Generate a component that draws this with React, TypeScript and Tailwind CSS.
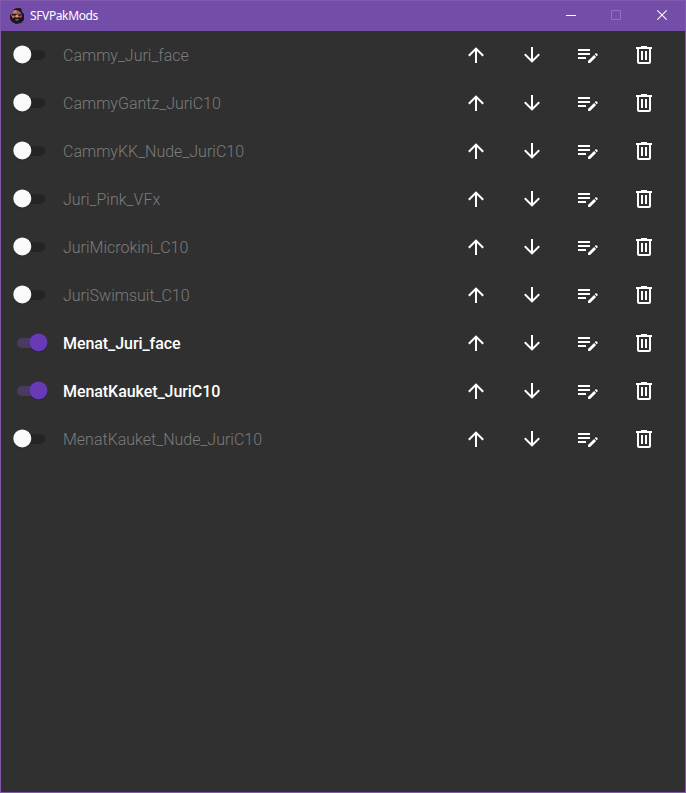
const mods = [
  { name: "Cammy_Juri_face", on: false },
  { name: "CammyGantz_JuriC10", on: false },
  { name: "CammyKK_Nude_JuriC10", on: false },
  { name: "Juri_Pink_VFx", on: false },
  { name: "JuriMicrokini_C10", on: false },
  { name: "JuriSwimsuit_C10", on: false },
  { name: "Menat_Juri_face", on: true },
  { name: "MenatKauket_JuriC10", on: true },
  { name: "MenatKauket_Nude_JuriC10", on: false },
];

const icons = [
  { label: "Move up", d: "M13 20H11V8L5.5 13.5L4.08 12.08L12 4.16L19.92 12.08L18.5 13.5L13 8V20Z" },
  { label: "Move down", d: "M11 4H13V16L18.5 10.5L19.92 11.92L12 19.84L4.08 11.92L5.5 10.5L11 16V4Z" },
  {
    label: "Edit",
    d: "M2 6V8H14V6H2M2 10V12H14V10H2M20.04 10.13C19.9 10.13 19.76 10.19 19.65 10.3L18.65 11.3L20.7 13.35L21.7 12.35C21.92 12.14 21.92 11.79 21.7 11.58L20.42 10.3C20.31 10.19 20.18 10.13 20.04 10.13M18.07 11.88L12 17.94V20H14.06L20.12 13.93L18.07 11.88M2 14V16H10V14H2Z",
  },
  {
    label: "Delete",
    d: "M9 3V4H4V6H5V19A2 2 0 0 0 7 21H17A2 2 0 0 0 19 19V6H20V4H15V3H9M7 6H17V19H7V6M9 8V17H11V8H9M13 8V17H15V8H13Z",
  },
];

function Toggle({ on }: { on: boolean }) {
  return (
    <button role="switch" aria-checked={on} className="ml-4 flex h-12 w-[46px] shrink-0 items-center">
      <span className={`flex h-[10px] w-7 items-center rounded-full ${on ? "bg-[#4b3a60]" : "bg-[#242424]"}`}>
        <span
          className={`h-[18px] w-[18px] shrink-0 -translate-y-[0.6px] rounded-full shadow-[0_1px_1px_rgba(0,0,0,0.25)] ${
            on ? "translate-x-[12.5px] bg-[#673ab7]" : "-translate-x-[3.7px] bg-[#fafafa]"
          }`}
        />
      </span>
    </button>
  );
}

function AppIcon() {
  return (
    <svg width="16" height="16" viewBox="0 0 16 16" className="shrink-0">
      <path d="M5 1L8 0L12 1L13 4L15 6V12L12 15L7 16L3 14L1 11V7L3 5Z" fill="#1c1621" />
      <path d="M4 3L7 2L10 3L12 5L13 9H3L2 7Z" fill="#a65f4e" />
      <path d="M4 3L7 2L8 4L5 5Z" fill="#d58b68" />
      <path d="M3 6H7L8 7L12 6V7.5L8.5 8L7 7.5L3 7.5Z" fill="#23151d" />
      <path d="M7 7H9L9.5 9.5H6.5Z" fill="#df9470" />
      <path d="M3 8H5.5L5 10L3 9.5Z" fill="#c27860" />
      <path d="M10.5 8H12.5L12 10L10.5 9.5Z" fill="#93503f" />
      <path d="M6 11.2H10L9 12.5H7Z" fill="#8f7475" />
      <path d="M9 0H12L13 4L11 3Z" fill="#21182a" />
    </svg>
  );
}

export default function App() {
  return (
    <div className="flex h-[793px] w-[686px] flex-col border border-[#8059ad] bg-[#303030] text-white">
      <header className="flex h-[30px] shrink-0 items-center bg-[#744da9] pl-2">
        <AppIcon />
        <span className="ml-[5px] flex-1 font-['Noto_Sans',sans-serif] text-[12px] leading-4 tracking-[-0.38px]">
          SFVPakMods
        </span>
        <svg width="138" height="30" viewBox="0 0 138 30" fill="none" stroke="#fff" className="shrink-0">
          <path d="M19 14.5H29" />
          <path d="M64.5 9.5H73.5V18.5H64.5Z" stroke="#9471bf" />
          <path d="M110.3 9.3L119.7 18.7M119.7 9.3L110.3 18.7" strokeWidth="1.1" />
        </svg>
      </header>
      <main className="flex flex-col font-['Roboto',sans-serif]">
        {mods.map((mod) => (
          <div key={mod.name} className="flex h-12 items-center">
            <Toggle on={mod.on} />
            <span
              className={`flex-1 pt-0.5 text-base ${
                mod.on ? "font-medium tracking-[-0.06px] text-white" : "font-light text-[#7c7c7c]"
              }`}
            >
              {mod.name}
            </span>
            <div className="mr-[29px] flex gap-8">
              {icons.map((icon) => (
                <button key={icon.label} aria-label={icon.label}>
                  <svg width="24" height="24" viewBox="0 0 24 24" fill="#fff" className="block">
                    <path d={icon.d} />
                  </svg>
                </button>
              ))}
            </div>
          </div>
        ))}
      </main>
    </div>
  );
}
